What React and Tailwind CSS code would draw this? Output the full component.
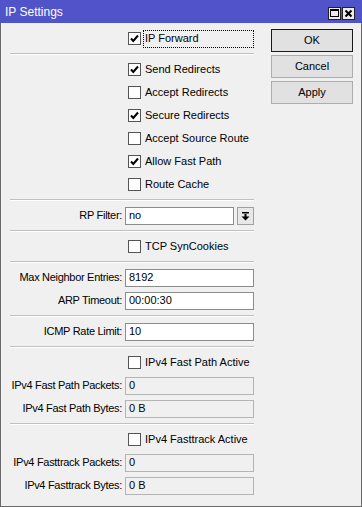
import React from "react";

const Check = ({ checked }) => (
  <div className="w-[13px] h-[13px] bg-white border border-[#555] flex items-center justify-center shrink-0">
    {checked && (
      <svg width="11" height="11" viewBox="0 0 11 11">
        <path d="M2 5.5 L4.3 8 L9 2.5" fill="none" stroke="#000" strokeWidth="2" />
      </svg>
    )}
  </div>
);

const CheckRow = ({ checked, label, focus }) => (
  <div className="flex h-[23px] items-center">
    <div className="w-[118px] shrink-0" />
    <Check checked={checked} />
    {focus ? (
      <div className="ml-[2px] w-[111px] h-[18px] border border-dotted border-black flex items-center pl-[1px]">
        {label}
      </div>
    ) : (
      <div className="ml-[4px] whitespace-nowrap">{label}</div>
    )}
  </div>
);

const FieldRow = ({ label, value, readOnly, dropdown }) => (
  <div className="flex h-[23px] items-center">
    <div className="w-[115px] shrink-0 flex justify-end pr-[3px] whitespace-nowrap tracking-[-0.3px]">
      <span>{label}</span>
    </div>
    {dropdown ? (
      <div className="flex w-[129px] gap-[3px]">
        <div className="h-[18px] flex-1 bg-white border border-[#8c8c8c] flex items-center px-[3px]">{value}</div>
        <div className="h-[18px] w-[17px] bg-[#e8e8e8] border border-[#a0a0a0] flex items-center justify-center">
          <svg width="9" height="10" viewBox="0 0 9 10">
            <rect x="1" y="1" width="7" height="1.5" fill="#000" />
            <rect x="3.5" y="3" width="2" height="3" fill="#000" />
            <polygon points="0.5,5.5 8.5,5.5 4.5,9.5" fill="#000" />
          </svg>
        </div>
      </div>
    ) : (
      <div
        className={
          "h-[18px] w-[129px] border flex items-center px-[3px] " +
          (readOnly ? "bg-[#f0f0f0] border-[#b4b4b4]" : "bg-white border-[#8c8c8c]")
        }
      >
        {value}
      </div>
    )}
  </div>
);

const Sep = () => <div className="my-[3px] h-[2px] border-t border-[#c0c0c0] border-b border-b-white w-[244px]" />;

const Btn = ({ children, def }) => (
  <div
    className={
      "h-[23px] w-[82px] flex items-center justify-center bg-[#e1e1e1] border " +
      (def ? "border-[#1a1a1a]" : "border-[#adadad]")
    }
  >
    {children}
  </div>
);

export default function App() {
  return (
    <div
      className="w-[362px] h-[507px] flex flex-col text-[11px] text-black"
      style={{ fontFamily: '"Liberation Sans", Arial, sans-serif' }}
    >
      <div className="h-[23px] bg-[#5153c9] flex items-center justify-between pl-[5px] pr-[7px] shrink-0">
        <div className="text-white text-[12px]">IP Settings</div>
        <div className="flex gap-[1px] mt-[3px]">
          <div className="w-[13px] h-[13px] bg-[#ececec] border border-[#222] flex items-center justify-center">
            <div className="w-[9px] h-[8px] border border-black border-t-2" />
          </div>
          <div className="w-[13px] h-[13px] bg-[#ececec] border border-[#222] flex items-center justify-center">
            <svg width="9" height="9" viewBox="0 0 9 9">
              <path d="M1.5 1.5 L7.5 7.5 M7.5 1.5 L1.5 7.5" stroke="#000" strokeWidth="2" />
            </svg>
          </div>
        </div>
      </div>
      <div className="flex-1 bg-[#f0f0f0] border-x border-b border-[#6a6a6a] flex">
        <div className="pl-[9px] pt-[4px] w-[254px] shrink-0">
          <CheckRow checked label="IP Forward" focus />
          <Sep />
          <CheckRow checked label="Send Redirects" />
          <CheckRow label="Accept Redirects" />
          <CheckRow checked label="Secure Redirects" />
          <CheckRow label="Accept Source Route" />
          <CheckRow checked label="Allow Fast Path" />
          <CheckRow label="Route Cache" />
          <Sep />
          <FieldRow label="RP Filter:" value="no" dropdown />
          <Sep />
          <CheckRow label="TCP SynCookies" />
          <Sep />
          <FieldRow label="Max Neighbor Entries:" value="8192" />
          <FieldRow label="ARP Timeout:" value="00:00:30" />
          <Sep />
          <FieldRow label="ICMP Rate Limit:" value="10" />
          <Sep />
          <CheckRow label="IPv4 Fast Path Active" />
          <FieldRow label="IPv4 Fast Path Packets:" value="0" readOnly />
          <FieldRow label="IPv4 Fast Path Bytes:" value="0 B" readOnly />
          <Sep />
          <CheckRow label="IPv4 Fasttrack Active" />
          <FieldRow label="IPv4 Fasttrack Packets:" value="0" readOnly />
          <FieldRow label="IPv4 Fasttrack Bytes:" value="0 B" readOnly />
        </div>
        <div className="ml-[16px] pt-[6px] flex flex-col gap-[3px]">
          <Btn def>OK</Btn>
          <Btn>Cancel</Btn>
          <Btn>Apply</Btn>
        </div>
      </div>
    </div>
  );
}
